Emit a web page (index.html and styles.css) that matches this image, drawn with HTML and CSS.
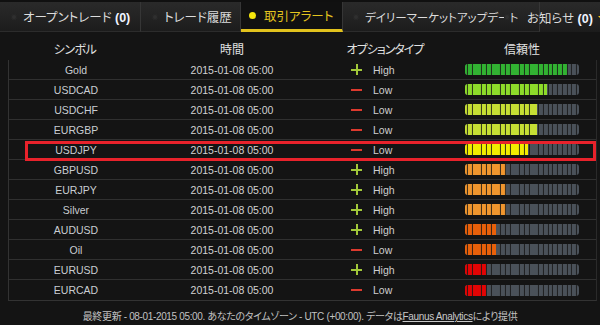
FILE: index.html
```html
<!DOCTYPE html>
<html lang="ja">
<head>
<meta charset="utf-8">
<title>取引アラート</title>
<link rel="stylesheet" href="styles.css">
</head>
<body>
<div class="page">
  <nav class="tabs">
    <div class="tab tab-open"><span class="dot"></span><span class="label">オープントレード <b>(0)</b></span></div>
    <div class="tab tab-history"><span class="dot"></span><span class="label">トレード履歴</span></div>
    <div class="tab tab-alert active"><span class="dot"></span><span class="label">取引アラート</span></div>
    <div class="tab tab-daily"><span class="dot"></span><span class="label">デイリーマーケットアップデート</span></div>
    <div class="tab tab-news"><span class="dot"></span><span class="label">お知らせ <b>(0)</b></span><span class="caret"></span></div>
  </nav>

  <div class="head">
    <div class="col-sym">シンボル</div>
    <div class="col-time">時間</div>
    <div class="col-opt">オプションタイプ</div>
    <div class="col-rel">信頼性</div>
  </div>

  <div class="table">
    <div class="row"><div class="col-sym">Gold</div><div class="col-time">2015-01-08 05:00</div><div class="col-opt"><span class="ico plus"></span>High</div><div class="col-rel"><div class="bar"><div class="fill c-green" style="width:102px"></div></div></div></div>
    <div class="row"><div class="col-sym">USDCAD</div><div class="col-time">2015-01-08 05:00</div><div class="col-opt"><span class="ico minus"></span>Low</div><div class="col-rel"><div class="bar"><div class="fill c-lime" style="width:82px"></div></div></div></div>
    <div class="row"><div class="col-sym">USDCHF</div><div class="col-time">2015-01-08 05:00</div><div class="col-opt"><span class="ico minus"></span>Low</div><div class="col-rel"><div class="bar"><div class="fill c-ylime" style="width:72px"></div></div></div></div>
    <div class="row"><div class="col-sym">EURGBP</div><div class="col-time">2015-01-08 05:00</div><div class="col-opt"><span class="ico minus"></span>Low</div><div class="col-rel"><div class="bar"><div class="fill c-ylime" style="width:72px"></div></div></div></div>
    <div class="row"><div class="col-sym">USDJPY</div><div class="col-time">2015-01-08 05:00</div><div class="col-opt"><span class="ico minus"></span>Low</div><div class="col-rel"><div class="bar"><div class="fill c-yellow" style="width:63px"></div></div></div></div>
    <div class="row"><div class="col-sym">GBPUSD</div><div class="col-time">2015-01-08 05:00</div><div class="col-opt"><span class="ico plus"></span>High</div><div class="col-rel"><div class="bar"><div class="fill c-orange" style="width:41px"></div></div></div></div>
    <div class="row"><div class="col-sym">EURJPY</div><div class="col-time">2015-01-08 05:00</div><div class="col-opt"><span class="ico plus"></span>High</div><div class="col-rel"><div class="bar"><div class="fill c-orange" style="width:41px"></div></div></div></div>
    <div class="row"><div class="col-sym">Silver</div><div class="col-time">2015-01-08 05:00</div><div class="col-opt"><span class="ico plus"></span>High</div><div class="col-rel"><div class="bar"><div class="fill c-orange" style="width:41px"></div></div></div></div>
    <div class="row"><div class="col-sym">AUDUSD</div><div class="col-time">2015-01-08 05:00</div><div class="col-opt"><span class="ico plus"></span>High</div><div class="col-rel"><div class="bar"><div class="fill c-dorange" style="width:31px"></div></div></div></div>
    <div class="row"><div class="col-sym">Oil</div><div class="col-time">2015-01-08 05:00</div><div class="col-opt"><span class="ico minus"></span>Low</div><div class="col-rel"><div class="bar"><div class="fill c-dorange" style="width:31px"></div></div></div></div>
    <div class="row"><div class="col-sym">EURUSD</div><div class="col-time">2015-01-08 05:00</div><div class="col-opt"><span class="ico plus"></span>High</div><div class="col-rel"><div class="bar"><div class="fill c-red" style="width:21px"></div></div></div></div>
    <div class="row"><div class="col-sym">EURCAD</div><div class="col-time">2015-01-08 05:00</div><div class="col-opt"><span class="ico minus"></span>Low</div><div class="col-rel"><div class="bar"><div class="fill c-red" style="width:21px"></div></div></div></div>
  </div>

  <p class="footer">最終更新 - 08-01-2015 05:00. あなたのタイムゾーン - UTC (+00:00). データは<a href="#">Faunus Analytics</a>により提供</p>

  <div class="highlight"></div>
</div>
</body>
</html>
```

FILE: styles.css
```css
* { box-sizing: border-box; }

html, body {
  margin: 0;
  padding: 0;
  background: #141414;
}

.page {
  position: relative;
  width: 600px;
  height: 325px;
  overflow: hidden;
  background: #141414;
  font-family: "Liberation Sans", "Noto Sans CJK JP", sans-serif;
  font-feature-settings: "palt";
  color: #d0d0d0;
}

/* ---------- tabs ---------- */
.tabs {
  display: flex;
  height: 32px;
  border-top: 2px solid #101010;
  background: linear-gradient(#2a2a2a, #1c1c1c);
}

.tab {
  display: flex;
  align-items: center;
  height: 30px;
  padding-left: 11px;
  border-right: 1px solid #363636;
  border-bottom: 1px solid #2c2c2c;
  font-size: 12.5px;
  color: #dcdcdc;
  white-space: nowrap;
  flex: none;
}

.tab b { font-weight: bold; color: #f0f4ff; }

.dot {
  width: 6px;
  height: 6px;
  border-radius: 50%;
  background: #2f2f2f;
  box-shadow: inset 0 0 0 1px #262626;
  margin-right: 6px;
  flex: none;
}

.tab-open { width: 141px; }
.tab-history { width: 100px; padding-left: 11px; }
.tab-alert { width: 102px; padding-left: 8px; }
.tab-daily { width: 197px; padding-left: 10px; font-size: 11.5px; }
.tab-news {
  margin-left: -46px;
  padding-left: 10px;
  border-right: 0;
  border-bottom: 0;
}
.tab-news .dot { margin-right: 17px; position: relative; z-index: 1; }

.tab.active {
  background: #111111;
  color: #e3c41f;
  border-bottom: 3px solid #e2c21d;
}
.tab.active .dot {
  width: 7px;
  height: 7px;
  background: #f4e50c;
  box-shadow: none;
  margin-right: 8px;
}

.caret {
  width: 0;
  height: 0;
  margin-left: 5px;
  margin-top: 2px;
  border-left: 4px solid transparent;
  border-right: 4px solid transparent;
  border-top: 4px solid #f0c21a;
}

/* ---------- table ---------- */
.head, .row {
  display: grid;
  grid-template-columns: 132px 182px 124px 150px;
  align-items: center;
}

.head {
  padding: 8px 0 0 9px;
  height: 28px;
  line-height: 20px;
  font-size: 12px;
  color: #e2e2e2;
}

.head > div { text-align: center; }
.head .col-opt { letter-spacing: -1px; }
.head .col-sym { letter-spacing: -0.5px; }

.table {
  margin: 0 3px 0 8px;
  border-left: 1px solid #333;
  border-right: 1px solid #2a2a2a;
  border-bottom: 1px solid #333;
}

.row {
  height: 20px;
  border-bottom: 1px solid #303030;
  font-size: 10.5px;
  color: #d2d2d2;
}
.row:last-child { border-bottom: 0; }

.col-sym, .col-time { text-align: center; }

.row .col-sym { color: #c9cdd2; padding-left: 2px; }

.row .col-opt {
  display: flex;
  align-items: center;
  padding-left: 28px;
  color: #cfcfcf;
}

.ico {
  position: relative;
  width: 11px;
  height: 11px;
  margin-right: 11px;
  flex: none;
}
.ico::before, .ico::after {
  content: "";
  position: absolute;
}
.plus::before {
  left: 0; top: 4.5px; width: 11px; height: 2px; background: #a2c83a;
}
.plus::after {
  left: 4.5px; top: 0; width: 2px; height: 11px; background: #a2c83a;
}
.minus::before {
  left: 0; top: 4.5px; width: 11px; height: 2px; background: #dc3a2e;
}

.row .col-rel {
  display: flex;
  justify-content: flex-start;
  padding-left: 18px;
}

.bar {
  position: relative;
  width: 114px;
  height: 11px;
  border-radius: 3px;
  background: #4a5159;
  overflow: hidden;
}

.fill {
  height: 100%;
}

.bar::after {
  content: "";
  position: absolute;
  inset: 0;
  background: repeating-linear-gradient(90deg, transparent 0 3.75px, rgba(22, 22, 22, 0.85) 3.75px 4.75px);
  background-position: 2.95px 0;
}

.c-green   { background: #32b232; }
.c-lime    { background: #8edc2a; }
.c-ylime   { background: #c6df34; }
.c-yellow  { background: #f1ee00; }
.c-orange  { background: #f0962e; }
.c-dorange { background: #e8600a; }
.c-red     { background: #e20404; }

/* ---------- footer ---------- */
.footer {
  margin: 0;
  padding-top: 8px;
  line-height: 16px;
  text-align: center;
  font-size: 10px;
  letter-spacing: -0.35px;
  color: #c2c2c2;
}
.footer a { color: #c8c8c8; text-decoration: underline; }

/* ---------- annotation ---------- */
.highlight {
  position: absolute;
  left: 25px;
  top: 141px;
  width: 571px;
  height: 20px;
  border: 3px solid #e8222b;
}
```
